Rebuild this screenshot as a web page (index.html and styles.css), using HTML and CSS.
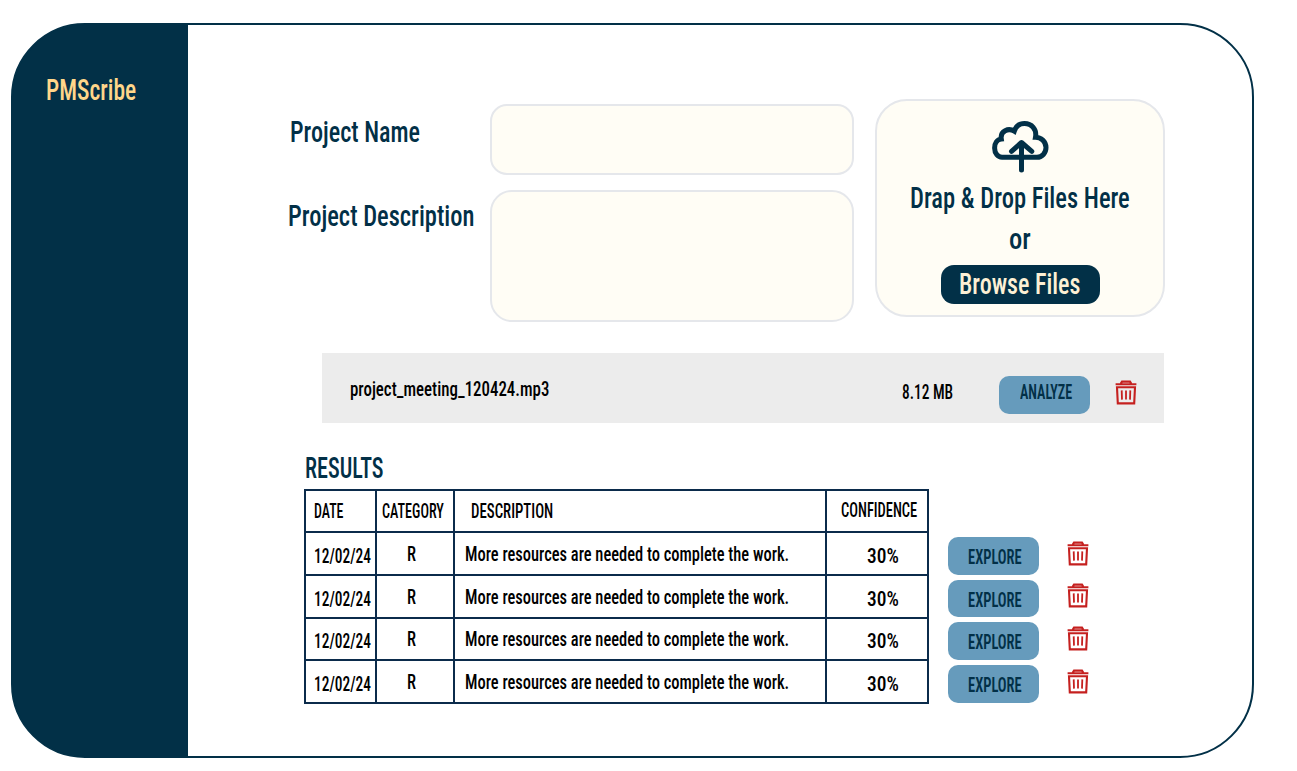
FILE: index.html
```html
<!DOCTYPE html>
<html lang="en">
<head>
<meta charset="utf-8">
<title>PMScribe</title>
<link rel="stylesheet" href="styles.css">
</head>
<body>
<svg class="defs" width="0" height="0">
  <symbol id="trash" viewBox="0 0 22 25">
    <path d="M.6 4.2H21.4M5.8 3.6L7 1.6H15L16.2 3.6M2 7.2H20L19.2 23.4H2.800Z" fill="none" stroke="#c5201f" stroke-width="2.100"/>
    <path d="M6.7 10.4L7 19.6M11 10.4V19.6M15.3 10.4L15 19.6" fill="none" stroke="#c5201f" stroke-width="1.800"/>
  </symbol>
</svg>
<div class="frame">
  <aside class="sidebar"><h1 class="t lg brand">PMScribe</h1></aside>
  <main class="content">
    <section class="form">
      <div class="labels">
        <label class="t lg l-name">Project Name</label>
        <label class="t lg l-desc">Project Description</label>
      </div>
      <div class="fields">
        <div class="field name"></div>
        <div class="field desc"></div>
      </div>
      <div class="upload">
        <svg class="cloud" viewBox="0 0 72 65" width="72" height="65" fill="none" stroke="#023047" stroke-width="5" stroke-linejoin="round" stroke-linecap="round">
          <path stroke-linejoin="miter" d="M17 42.3H52C57 42.3 61 38 61 32.5C61 26.5 56 22.300 50.500 22.300C52 14 46.500 8.500 39.500 8.500C34.500 8.500 31 11 29.300 16.200C23.500 12.500 15 16 16.300 24C12 24.500 9.600 28.500 9.600 33C9.600 38.500 13 42.300 17 42.300Z"/>
          <path d="M36.500 28V55M26.500 36.300L36.500 27.500L46.800 36.300"/>
        </svg>
        <p class="t lg drag">Drap &amp; Drop Files Here</p>
        <p class="t lg or">or</p>
        <div class="browse"><span class="t lg browse-t">Browse Files</span></div>
      </div>
    </section>
    <section class="file">
      <span class="t filename">project_meeting_120424.mp3</span>
      <span class="t size">8.12 MB</span>
      <div class="btn analyze"><span class="t analyze-t">ANALYZE</span></div>
      <svg class="trash"><use href="#trash"/></svg>
    </section>
    <h2 class="t lg results-t">RESULTS</h2>
    <section class="results">
      <div class="table">
        <div class="row head"><div><span class="t h-date">DATE</span></div><div><span class="t h-cat">CATEGORY</span></div><div><span class="t h-desc">DESCRIPTION</span></div><div><span class="t h-conf">CONFIDENCE</span></div></div>
        <div class="row"><div><span class="t date">12/02/24</span></div><div><span class="t cat">R</span></div><div><span class="t text">More resources are needed to complete the work.</span></div><div><span class="t conf">30%</span></div></div>
        <div class="row"><div><span class="t date">12/02/24</span></div><div><span class="t cat">R</span></div><div><span class="t text">More resources are needed to complete the work.</span></div><div><span class="t conf">30%</span></div></div>
        <div class="row short"><div><span class="t date">12/02/24</span></div><div><span class="t cat">R</span></div><div><span class="t text">More resources are needed to complete the work.</span></div><div><span class="t conf">30%</span></div></div>
        <div class="row"><div><span class="t date">12/02/24</span></div><div><span class="t cat">R</span></div><div><span class="t text">More resources are needed to complete the work.</span></div><div><span class="t conf">30%</span></div></div>
      </div>
      <div class="actions">
        <div class="action"><div class="btn"><span class="t explore">EXPLORE</span></div><svg class="trash"><use href="#trash"/></svg></div>
        <div class="action"><div class="btn"><span class="t explore">EXPLORE</span></div><svg class="trash"><use href="#trash"/></svg></div>
        <div class="action"><div class="btn"><span class="t explore">EXPLORE</span></div><svg class="trash"><use href="#trash"/></svg></div>
        <div class="action"><div class="btn"><span class="t explore">EXPLORE</span></div><svg class="trash"><use href="#trash"/></svg></div>
      </div>
    </section>
  </main>
</div>
</body>
</html>
```
FILE: styles.css
```css
*{box-sizing:border-box}
body{margin:0;background:#fff;font-family:"Roboto Condensed",Roboto,sans-serif;overflow:hidden}
.defs{display:block}
.frame{display:flex;width:1243px;height:735px;margin:23px 0 0 11px;border:2px solid #023047;border-radius:74px;background:linear-gradient(90deg,#023047 175px,#fff 175px)}
.sidebar{width:175px;padding:45px 0 0 33px;flex:none}
.content{flex:1;padding:74px 0 0 100px}

/* Condensed lettering: every label is narrowed to its own width */
.t{display:block;width:max-content;margin:0;white-space:nowrap;transform-origin:0 0;font-size:20.7px;line-height:24px;font-weight:500;color:#000}
.lg{font-size:29.5px;line-height:40px;color:#023047}
.brand{color:#ffd68a;font-weight:500;transform:scaleX(.797)}

.form{display:flex;height:223px}
.labels{width:202px;padding-top:13px}
.l-name{margin-left:1.500px;transform:scaleX(.819)}
.l-desc{margin:44px 0 0 -.5px;transform:scaleX(.83)}
.fields{width:364px;padding-top:5px}
.field{border:2px solid #e5e7eb;background:#fffdf5}
.name{height:71px;border-radius:17px}
.desc{height:132px;margin-top:15px;border-radius:22px}
.upload{width:290px;height:218px;margin-left:21.400px;border:2px solid #e5e7eb;border-radius:32px;background:#fffdf5;padding:14px 0 0}
.cloud{display:block;margin-left:107.600px}
.drag{margin:-2px 0 0 33px;transform:scaleX(.832)}
.or{margin:1px 0 0 132px;transform:scaleX(.9)}
.browse{width:159px;height:39px;margin:6px 0 0 63.600px;padding-left:18.500px;border-radius:13px;background:#023047}
.browse-t{line-height:38px;color:#fdf0d5;font-weight:500;transform:scaleX(.815)}

.file{display:flex;width:842px;height:70px;margin:31px 0 0 34px;background:#ececec}
.filename{margin:24px 0 0 27.500px;width:552px;transform:scaleX(.815)}
.size{margin-top:27px;width:97px;transform:scaleX(.745)}
.btn{width:91px;height:38px;border-radius:10px;background:#669bbc;flex:none}
.btn .t{color:#023047;font-weight:600}
.analyze{margin-top:22.500px;padding:4px 0 0 21.500px}
.analyze-t{transform:scaleX(.68)}
.trash{width:22px;height:25px;flex:none}
.file .trash{margin:26.500px 0 0 25px}

.results-t{margin:25px 0 0 17px;transform:scaleX(.75)}
.results{display:flex;align-items:flex-start;margin:1px 0 0 16px}
.table{width:625px;border:2px solid #0b2b4b;border-width:2px 0 0 2px}
.row{display:grid;grid-template-columns:71px 78px 372px 102px;height:43px}
.head,.short{height:42px}
.row>div{border:2px solid #0b2b4b;border-width:0 2px 2px 0;overflow:hidden}
.h-date{margin:8px 0 0 7.700px;transform:scaleX(.675)}
.h-cat{margin:8px 0 0 5px;transform:scaleX(.685)}
.h-desc{margin:8px 0 0 16px;transform:scaleX(.718)}
.h-conf{margin:7px 0 0 13.500px;transform:scaleX(.7)}
.date{margin:11px 0 0 7.500px;transform:scaleX(.745)}
.cat{margin:9px 0 0 29.500px;transform:scaleX(.8)}
.text{margin:9px 0 0 9.500px;transform:scaleX(.796)}
.conf{margin:11px 0 0 39.500px;transform:scaleX(.94)}
.short .date,.short .conf{margin-top:10px}
.short .cat,.short .text{margin-top:8px}
.actions{margin:48.300px 0 0 19px}
.action{display:flex;height:42.600px}
.explore{margin:8px 0 0 19.500px;transform:scaleX(.7)}
.action .btn{height:37.600px}
.action .trash{margin:3.500px 0 0 28px}
```
